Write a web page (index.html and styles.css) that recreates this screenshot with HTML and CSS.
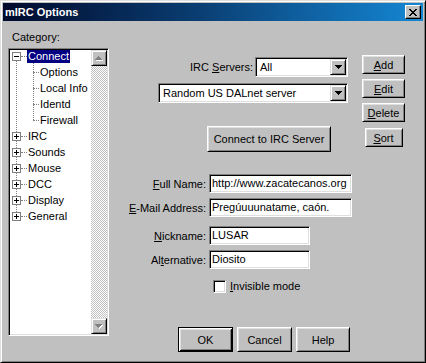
FILE: index.html
```html
<!DOCTYPE html>
<html lang="en">
<head>
    <meta charset="UTF-8">
    <title>mIRC Options</title>
    <link rel="stylesheet" href="styles.css">
</head>
<body>
<div class="window">
    <div class="titlebar">
        <span class="title">mIRC Options</span>
        <span class="close">
            <svg width="8" height="7" viewBox="0 0 8 7" shape-rendering="crispEdges"><path d="M0 0h2v1H0zM6 0h2v1H6zM1 1h2v1H1zM5 1h2v1H5zM2 2h4v1H2zM3 3h2v1H3zM2 4h4v1H2zM1 5h2v1H1zM5 5h2v1H5zM0 6h2v1H0zM6 6h2v1H6z" fill="#000"/></svg>
        </span>
    </div>
    <div class="content">
        <div class="category">
            <div class="cat-label">Category:</div>
            <div class="tree">
                <div class="tree-items">
                    <div class="line-root"></div>
                    <div class="line-child"></div>
                    <div class="node"><span class="exp minus"></span><span class="hline"></span><span class="label selected">Connect</span></div>
                    <div class="node child"><span class="hline"></span><span class="label">Options</span></div>
                    <div class="node child"><span class="hline"></span><span class="label">Local Info</span></div>
                    <div class="node child"><span class="hline"></span><span class="label">Identd</span></div>
                    <div class="node child"><span class="hline"></span><span class="label">Firewall</span></div>
                    <div class="node"><span class="exp"></span><span class="hline"></span><span class="label">IRC</span></div>
                    <div class="node"><span class="exp"></span><span class="hline"></span><span class="label">Sounds</span></div>
                    <div class="node"><span class="exp"></span><span class="hline"></span><span class="label">Mouse</span></div>
                    <div class="node"><span class="exp"></span><span class="hline"></span><span class="label">DCC</span></div>
                    <div class="node"><span class="exp"></span><span class="hline"></span><span class="label">Display</span></div>
                    <div class="node"><span class="exp"></span><span class="hline"></span><span class="label">General</span></div>
                </div>
                <div class="vscroll">
                    <div class="arrow-btn">
                        <svg width="8" height="5" viewBox="0 0 8 5" shape-rendering="crispEdges"><path d="M4 1h1v1H4zM3 2h3v1H3zM2 3h5v1H2zM1 4h7v1H1z" fill="#fff"/><path d="M3 0h1v1H3zM2 1h3v1H2zM1 2h5v1H1zM0 3h7v1H0z" fill="#808080"/></svg>
                    </div>
                    <div class="track"></div>
                    <div class="arrow-btn">
                        <svg width="8" height="5" viewBox="0 0 8 5" shape-rendering="crispEdges"><path d="M1 1h7v1H1zM2 2h5v1H2zM3 3h3v1H3zM4 4h1v1H4z" fill="#fff"/><path d="M0 0h7v1H0zM1 1h5v1H1zM2 2h3v1H2zM3 3h1v1H3z" fill="#808080"/></svg>
                    </div>
                </div>
            </div>
        </div>

        <div class="main">
            <div class="row-servers">
                <span>IRC <u>S</u>ervers:</span>
                <div class="combo small">
                    <span class="combo-text">All</span>
                    <span class="combo-btn"><svg width="7" height="4" viewBox="0 0 7 4" shape-rendering="crispEdges"><path d="M0 0h7v1H0zM1 1h5v1H1zM2 2h3v1H2zM3 3h1v1H3z" fill="#000"/></svg></span>
                </div>
            </div>
            <div class="row-network">
                <div class="combo wide">
                    <span class="combo-text">Random US DALnet server</span>
                    <span class="combo-btn"><svg width="7" height="4" viewBox="0 0 7 4" shape-rendering="crispEdges"><path d="M0 0h7v1H0zM1 1h5v1H1zM2 2h3v1H2zM3 3h1v1H3z" fill="#000"/></svg></span>
                </div>
            </div>
            <div class="button connect-btn">Connect to IRC Server</div>

            <div class="fields">
                <div class="field-row">
                    <span class="field-label"><u>F</u>ull Name:</span>
                    <div class="field long">http://www.zacatecanos.org</div>
                </div>
                <div class="field-row">
                    <span class="field-label"><u>E</u>-Mail Address:</span>
                    <div class="field long">Pregúuuunatame, caón.</div>
                </div>
                <div class="field-row group">
                    <span class="field-label"><u>N</u>ickname:</span>
                    <div class="field short">LUSAR</div>
                </div>
                <div class="field-row">
                    <span class="field-label">Al<u>t</u>ernative:</span>
                    <div class="field short">Diosito</div>
                </div>
            </div>

            <div class="check-row">
                <span class="checkbox"></span>
                <span><u>I</u>nvisible mode</span>
            </div>

            <div class="dialog-buttons">
                <div class="button default">OK</div>
                <div class="button">Cancel</div>
                <div class="button help">Help</div>
            </div>
        </div>

        <div class="side">
            <div class="button side-btn"><u>A</u>dd</div>
            <div class="button side-btn"><u>E</u>dit</div>
            <div class="button side-btn"><u>D</u>elete</div>
            <div class="button side-btn sort"><u>S</u>ort</div>
        </div>
    </div>
</div>
</body>
</html>
```

FILE: styles.css
```css
body {
    margin: 0;
    background: #c0c0c0;
    font-family: "Liberation Sans", Arial, sans-serif;
    font-size: 11px;
    color: #000;
}
.window {
    width: 426px;
    height: 363px;
    box-sizing: border-box;
    background: #c0c0c0;
    border: 1px solid;
    border-color: #dfdfdf #000 #000 #dfdfdf;
    box-shadow: inset 1px 1px #fff, inset -1px -1px #808080;
    padding: 2px;
}
.titlebar {
    height: 18px;
    display: flex;
    align-items: center;
    justify-content: space-between;
    padding: 0 2px;
    background: linear-gradient(90deg, #000a2c 0%, #0a3c70 45%, #1487d4 100%);
    color: #fff;
    font-weight: bold;
}
.close {
    width: 16px;
    height: 14px;
    box-sizing: border-box;
    display: flex;
    align-items: center;
    justify-content: center;
    background: #c0c0c0;
    border: 1px solid;
    border-color: #fff #000 #000 #fff;
    box-shadow: inset -1px -1px #808080;
}
.content {
    display: flex;
}

/* category tree */
.category {
    margin-left: 5px;
    width: 101px;
    padding-top: 10px;
}
.cat-label {
    padding-left: 4px;
    line-height: 13px;
}
.tree {
    margin-top: 4px;
    height: 288px;
    box-sizing: border-box;
    display: flex;
    background: #fff;
    border: 1px solid;
    border-color: #808080 #fff #fff #808080;
    box-shadow: inset 1px 1px #000, inset -1px -1px #dfdfdf;
    padding: 1px;
}
.tree-items {
    flex: 1;
    position: relative;
}
.line-root {
    position: absolute;
    left: 6px;
    top: 6px;
    height: 160px;
    border-left: 1px dotted #808080;
}
.line-child {
    position: absolute;
    left: 23px;
    top: 13px;
    height: 57px;
    border-left: 1px dotted #808080;
}
.node {
    height: 16px;
    display: flex;
    align-items: flex-start;
    position: relative;
}
.exp {
    width: 9px;
    height: 9px;
    box-sizing: border-box;
    margin: 2px 0 0 2px;
    border: 1px solid #808080;
    background: #fff;
    position: relative;
}
.exp::before {
    content: "";
    position: absolute;
    left: 1px;
    top: 3px;
    width: 5px;
    height: 1px;
    background: #000;
}
.exp:not(.minus)::after {
    content: "";
    position: absolute;
    left: 3px;
    top: 1px;
    width: 1px;
    height: 5px;
    background: #000;
}
.hline {
    width: 6px;
    margin-top: 6px;
    border-top: 1px dotted #808080;
}
.node.child .hline {
    margin-left: 23px;
}
.label {
    line-height: 13px;
    padding: 0 1px;
}
.label.selected {
    background: #000080;
    color: #fff;
}
.vscroll {
    width: 16px;
    display: flex;
    flex-direction: column;
}
.arrow-btn {
    height: 16px;
    box-sizing: border-box;
    display: flex;
    align-items: center;
    justify-content: center;
    background: #c0c0c0;
    border: 1px solid;
    border-color: #dfdfdf #000 #000 #dfdfdf;
    box-shadow: inset 1px 1px #fff, inset -1px -1px #808080;
}
.track {
    flex: 1;
    background-image: repeating-conic-gradient(#c0c0c0 0 25%, #fff 0 50%);
    background-size: 2px 2px;
}

/* main pane */
.main {
    width: 243px;
}
.row-servers {
    margin-top: 36px;
    display: flex;
    justify-content: flex-end;
    align-items: center;
    gap: 2px;
    padding-right: 4px;
}
.row-network {
    margin-top: 6px;
    display: flex;
    justify-content: flex-end;
    padding-right: 4px;
}
.combo {
    height: 20px;
    box-sizing: border-box;
    display: flex;
    background: #fff;
    border: 1px solid;
    border-color: #808080 #fff #fff #808080;
    box-shadow: inset 1px 1px #000, inset -1px -1px #dfdfdf;
    padding: 1px;
}
.combo.small {
    width: 93px;
}
.combo.wide {
    width: 190px;
}
.combo-text {
    flex: 1;
    line-height: 16px;
    padding-left: 3px;
}
.combo-btn {
    width: 16px;
    height: 16px;
    box-sizing: border-box;
    display: flex;
    align-items: center;
    justify-content: center;
    background: #c0c0c0;
    border: 1px solid;
    border-color: #dfdfdf #000 #000 #dfdfdf;
    box-shadow: inset 1px 1px #fff, inset -1px -1px #808080;
}
.button {
    box-sizing: border-box;
    display: flex;
    align-items: center;
    justify-content: center;
    background: #c0c0c0;
    border: 1px solid;
    border-color: #fff #000 #000 #fff;
    box-shadow: inset 1px 1px #dfdfdf, inset -1px -1px #808080;
}
.connect-btn {
    margin: 23px 0 0 98px;
    width: 124px;
    height: 26px;
}
.fields {
    margin-top: 22px;
}
.field-row {
    display: flex;
    align-items: center;
    gap: 3px;
}
.field-row + .field-row {
    margin-top: 5px;
}
.field-row.group {
    margin-top: 9px;
}
.field-label {
    width: 97px;
    text-align: right;
    white-space: nowrap;
}
.field {
    height: 19px;
    box-sizing: border-box;
    background: #fff;
    border: 1px solid;
    border-color: #808080 #fff #fff #808080;
    box-shadow: inset 1px 1px #000, inset -1px -1px #dfdfdf;
    padding: 1px 2px;
    line-height: 15px;
    white-space: nowrap;
    overflow: hidden;
}
.field.long {
    width: 143px;
}
.field.short {
    width: 101px;
}
.check-row {
    margin: 11px 0 0 104px;
    display: flex;
    align-items: center;
    gap: 4px;
    line-height: 13px;
}
.checkbox {
    width: 13px;
    height: 13px;
    box-sizing: border-box;
    background: #fff;
    border: 1px solid;
    border-color: #808080 #fff #fff #808080;
    box-shadow: inset 1px 1px #000, inset -1px -1px #dfdfdf;
}
.dialog-buttons {
    margin: 34px 0 0 69px;
    display: flex;
    gap: 4px;
}
.dialog-buttons .button {
    width: 55px;
    height: 25px;
}
.dialog-buttons .button.help {
    width: 54px;
}
.button.default {
    border: 1px solid #000;
    box-shadow: inset 1px 1px #fff, inset -1px -1px #000, inset 2px 2px #dfdfdf, inset -2px -2px #808080;
}

/* side buttons */
.side {
    margin-left: 10px;
    padding-top: 34px;
    width: 43px;
    display: flex;
    flex-direction: column;
    align-items: center;
    gap: 5px;
}
.side-btn {
    width: 43px;
    height: 19px;
}
.side-btn.sort {
    width: 38px;
    margin-top: 1px;
}
```
